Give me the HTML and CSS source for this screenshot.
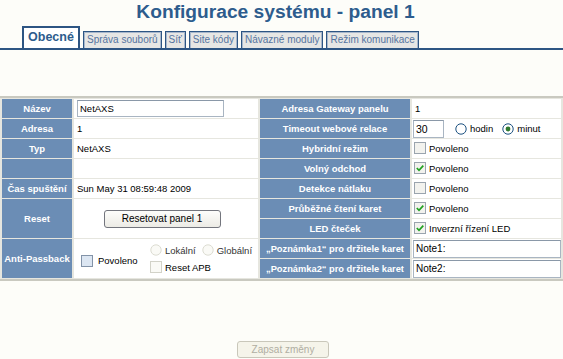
FILE: index.html
```html
<!DOCTYPE html>
<html>
	<head>
		<meta charset="UTF-8">
		<title>Konfigurace systému</title>
		<link rel="stylesheet" href="styles.css">
	</head>
	<body>

		<!-- nadpis -->
		<h1 class="title">Konfigurace systému - panel 1</h1>

		<!-- záložky -->
		<div class="tabs">
			<a class="tab active" href="javascript:;">Obecné</a>
			<a class="tab" href="javascript:;">Správa souborů</a>
			<a class="tab" href="javascript:;">Síť</a>
			<a class="tab" href="javascript:;">Site kódy</a>
			<a class="tab" href="javascript:;">Návazné moduly</a>
			<a class="tab" href="javascript:;">Režim komunikace</a>
		</div>

		<table class="conf">
			<colgroup>
				<col class="c1"><col class="c2"><col class="c3"><col class="c4">
			</colgroup>
			<tr>
				<th>Název</th>
				<td><input class="txt name" type="text" value="NetAXS"></td>
				<th>Adresa Gateway panelu</th>
				<td>1</td>
			</tr>
			<tr>
				<th>Adresa</th>
				<td>1</td>
				<th>Timeout webové relace</th>
				<td>
					<div class="line">
						<input class="txt tmo" type="text" value="30">
						<span class="rb"><svg width="12" height="12" viewBox="0 0 12 12"><circle cx="6" cy="6" r="5.2" fill="#fff" stroke="#1c5180"/></svg></span>hodin
						<span class="rb gap"><svg width="12" height="12" viewBox="0 0 12 12"><circle cx="6" cy="6" r="5.2" fill="#fff" stroke="#1c5180"/><circle cx="6" cy="6" r="2.4" fill="#2f7a2f"/></svg></span>minut
					</div>
				</td>
			</tr>
			<tr>
				<th>Typ</th>
				<td>NetAXS</td>
				<th>Hybridní režim</th>
				<td><span class="cb"><svg width="12" height="12" viewBox="0 0 12 12"><rect x="0.5" y="0.5" width="11" height="11" fill="#f2f2ee" stroke="#9aa4ae"/></svg></span>Povoleno</td>
			</tr>
			<tr>
				<th></th>
				<td></td>
				<th>Volný odchod</th>
				<td><span class="cb"><svg width="12" height="12" viewBox="0 0 12 12"><rect x="0.5" y="0.5" width="11" height="11" fill="#f2f2ee" stroke="#9aa4ae"/><path d="M2.8 6 L5 8.3 L9.3 3.6" fill="none" stroke="#21a121" stroke-width="1.7"/></svg></span>Povoleno</td>
			</tr>
			<tr>
				<th>Čas spuštění</th>
				<td>Sun May 31 08:59:48 2009</td>
				<th>Detekce nátlaku</th>
				<td><span class="cb"><svg width="12" height="12" viewBox="0 0 12 12"><rect x="0.5" y="0.5" width="11" height="11" fill="#f2f2ee" stroke="#9aa4ae"/></svg></span>Povoleno</td>
			</tr>
			<tr>
				<th rowspan="2">Reset</th>
				<td rowspan="2" class="center"><button class="btn reset">Resetovat panel 1</button></td>
				<th>Průběžné čtení karet</th>
				<td><span class="cb"><svg width="12" height="12" viewBox="0 0 12 12"><rect x="0.5" y="0.5" width="11" height="11" fill="#f2f2ee" stroke="#9aa4ae"/><path d="M2.8 6 L5 8.3 L9.3 3.6" fill="none" stroke="#21a121" stroke-width="1.7"/></svg></span>Povoleno</td>
			</tr>
			<tr>
				<th>LED čteček</th>
				<td><span class="cb"><svg width="12" height="12" viewBox="0 0 12 12"><rect x="0.5" y="0.5" width="11" height="11" fill="#f2f2ee" stroke="#9aa4ae"/><path d="M2.8 6 L5 8.3 L9.3 3.6" fill="none" stroke="#21a121" stroke-width="1.7"/></svg></span>Inverzní řízení LED</td>
			</tr>
			<tr>
				<th rowspan="2">Anti-Passback</th>
				<td rowspan="2">
					<div class="apb">
						<div class="apb-on"><span class="cb"><svg width="12" height="12" viewBox="0 0 12 12"><rect x="0.5" y="0.5" width="11" height="11" fill="#dce6f2" stroke="#8393a8"/></svg></span>Povoleno</div>
						<div class="apb-opt">
							<div class="line dis"><span class="rb"><svg width="12" height="12" viewBox="0 0 12 12"><circle cx="6" cy="6" r="5.2" fill="#fafaf6" stroke="#dcdcd2"/></svg></span>Lokální<span class="rb gap2"><svg width="12" height="12" viewBox="0 0 12 12"><circle cx="6" cy="6" r="5.2" fill="#fafaf6" stroke="#dcdcd2"/></svg></span>Globální</div>
							<div class="line"><span class="cb"><svg width="12" height="12" viewBox="0 0 12 12"><rect x="0.5" y="0.5" width="11" height="11" fill="#fafaf6" stroke="#d2d2c8"/></svg></span>Reset APB</div>
						</div>
					</div>
				</td>
				<th class="note">„Poznámka1“ pro držitele karet</th>
				<td><input class="txt nt" type="text" value="Note1:"></td>
			</tr>
			<tr>
				<th class="note">„Poznámka2“ pro držitele karet</th>
				<td><input class="txt nt" type="text" value="Note2:"></td>
			</tr>
		</table>

		<div class="save">
			<button class="btn off" disabled>Zapsat změny</button>
		</div>

	</body>
</html>
```

FILE: styles.css
```css
*{
	margin: 0;
	padding: 0;
	box-sizing: border-box;
}

body{
	background-color: #fdfdf9;
	font-family: "Liberation Sans", Arial, sans-serif;
	font-size: 9.5px;
	color: #000;
}

/*nadpis*/
.title{
	text-align: center;
	font-size: 19.2px;
	font-weight: bold;
	color: #2d5c8d;
	line-height: 24px;
	height: 28px;
	padding-right: 12px;
}

/*záložky*/
.tabs{
	display: flex;
	align-items: flex-end;
	gap: 3px;
	padding-left: 22px;
	border-bottom: 2px solid #2d5583;
	height: 22px;
}

.tab{
	display: block;
	height: 17px;
	line-height: 15px;
	padding: 0 3px;
	border: 1px solid #2d5583;
	border-bottom: none;
	box-shadow: inset 1px 1px 0 #a7b7cc, inset -1px 0 0 #a7b7cc;
	background-color: #e6e6e4;
	color: #5574a0;
	text-decoration: none;
	font-size: 10px;
}

.tab.active{
	width: 58px;
	height: 22px;
	line-height: 19px;
	padding: 0;
	text-align: center;
	border: 2px solid #2d5583;
	border-bottom: none;
	box-shadow: none;
	background-color: #fff;
	color: #2d5c8d;
	font-weight: bold;
	font-size: 12.5px;
}

/*tabulka*/
.conf{
	margin-top: 46px;
	width: 563px;
	table-layout: fixed;
	border-collapse: separate;
	border-spacing: 2px 1px;
	border-top: 2px solid #c9c9c0;
	border-bottom: 2px solid #c9c9c0;
	background-color: #e6e6df;
}

.c1{ width: 70px; }
.c2{ width: 184px; }
.c3{ width: 150px; }
.c4{ width: 149px; }

.conf th,
.conf td{
	height: 19px;
	padding: 0;
	white-space: nowrap;
	vertical-align: middle;
}

.conf th{
	background-color: #6b8db5;
	color: #fff;
	font-weight: bold;
	font-size: 9.5px;
	text-align: center;
	overflow: hidden;
}

.conf th.note{
	font-size: 9.3px;
}

.conf td{
	background-color: #fff;
	padding-left: 3px;
	text-align: left;
}

.conf td.center{
	text-align: center;
	padding-left: 0;
	padding-right: 8px;
}

.line{
	display: flex;
	align-items: center;
}

/*vstupy*/
.txt{
	font-family: "Liberation Sans", Arial, sans-serif;
	font-size: 9.5px;
	border: 1px solid #a9b5c2;
	border-top-color: #8a98a8;
	background-color: #fff;
	padding: 0 2px;
	outline: none;
}

.name{
	width: 147px;
	height: 17px;
}

.tmo{
	width: 31px;
	height: 18px;
	margin-left: -2px;
	font-size: 10.5px;
}

.nt{
	width: 148px;
	height: 18px;
	margin-left: -2px;
	font-size: 10px;
}

.rb{
	display: inline-flex;
	margin: 0 3px 0 11px;
}

.rb.gap{
	margin-left: 9px;
}

.cb{
	display: inline-flex;
	vertical-align: middle;
	margin: -2px 3px 0 -1px;
}

.dis{
	color: #333;
}

.dis .rb{
	margin-left: 0;
}

.dis .rb.gap2{
	margin-left: 6px;
}

/*anti-passback*/
.apb{
	display: flex;
	align-items: center;
	padding-left: 4px;
}

.apb-on{
	display: flex;
	align-items: center;
	width: 69px;
	margin-top: 4px;
}

.apb-on .cb{
	margin: 0 5px 0 0;
}

.apb-opt .line{
	height: 17px;
}

.apb-opt .cb{
	margin: 0 3px 0 0;
}

/*tlačítka*/
.btn{
	font-family: "Liberation Sans", Arial, sans-serif;
	font-size: 10px;
	color: #000;
	height: 18px;
	padding: 0;
	border: 1px solid #73757d;
	border-radius: 3px;
	background: linear-gradient(#fdfdfb, #ecebe5);
}

.btn.reset{
	width: 117px;
}

.btn.off{
	width: 92px;
	height: 17px;
	color: #b0aea2;
	border-color: #c9c7ba;
	background: #f5f4ea;
}

.save{
	text-align: center;
	margin-top: 60px;
	padding-left: 3px;
}
```
